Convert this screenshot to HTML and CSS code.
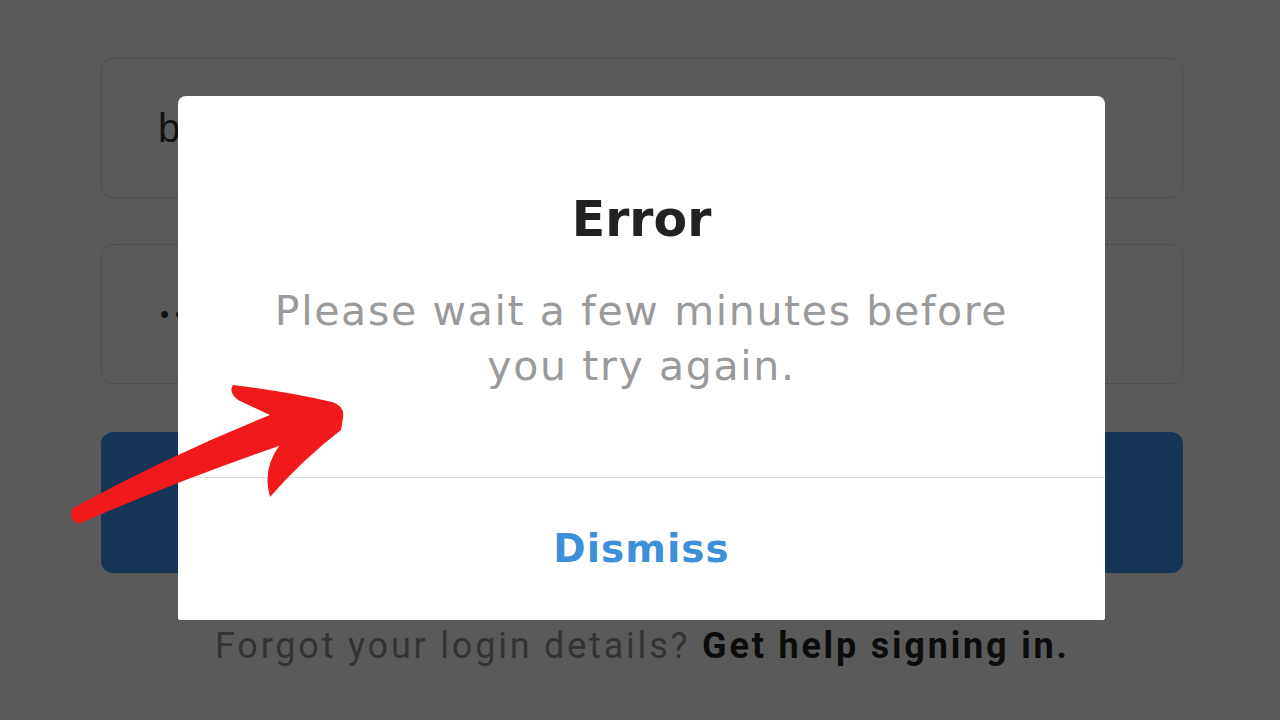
FILE: index.html
```html
<!DOCTYPE html>
<html>
<head>
<meta charset="utf-8">
<link rel="stylesheet" href="styles.css">
</head>
<body>
<div class="page">
  <div class="form">
    <div class="field"><span class="val">b</span></div>
    <div class="field"><span class="val dots">••••</span></div>
    <div class="btn"></div>
    <p class="help"><span class="muted">Forgot your login details?</span> <b>Get help signing in.</b></p>
  </div>
  <div class="modal">
    <div class="modal-body">
      <h1 class="title">Error</h1>
      <p class="msg">Please wait a few minutes before<br>you try again.</p>
    </div>
    <div class="modal-action">Dismiss</div>
  </div>
  <svg class="arrow" width="1280" height="720" viewBox="0 0 1280 720">
    <path d="M73,508 Q170,455 270,415 L238,400 Q228,392 233,385 Q290,392 332,402 Q345,406 343,418 L341,430 Q302,460 270,497 Q262,470 279,446 Q180,480 78,524 Q67,518 73,508 Z" fill="#f2191b"/>
  </svg>
</div>
</body>
</html>
```
FILE: styles.css
```css
html, body {
  margin: 0;
  padding: 0;
  background: #5a5a5a;
}
.page {
  position: relative;
  width: 1280px;
  height: 720px;
  overflow: hidden;
  font-family: "DejaVu Sans", sans-serif;
}
.form {
  padding: 58px 0 0 101px;
  width: 1082px;
  display: flex;
  flex-direction: column;
}
.field {
  border: 1.5px solid #4f4f4f;
  border-radius: 12px;
  margin-bottom: 46px;
  display: flex;
  align-items: center;
  padding-left: 56px;
  box-sizing: border-box;
  height: 140px;
}
.field + .field { margin-bottom: 48px; }
.val {
  font-family: "Liberation Sans", sans-serif;
  font-size: 40px;
  color: #111;
}
.dots { font-size: 26px; letter-spacing: 6px; padding-left: 2px; }
.btn {
  height: 141px;
  background: #153556;
  border-radius: 12px;
}
.help {
  margin: 52px 0 0 0;
  padding-left: 114px;
  font-family: Roboto, sans-serif;
  font-size: 36px;
  letter-spacing: 2.8px;
  color: #111;
}
.muted { color: #333; }
.help b { font-weight: 700; color: #0c0c0c; }
.modal {
  position: absolute;
  left: 178px;
  top: 96px;
  width: 927px;
  height: 524px;
  background: #fff;
  border-radius: 8px 8px 2px 2px;
  display: flex;
  flex-direction: column;
}
.modal-body {
  height: 382px;
  border-bottom: 1.5px solid #dedede;
  box-sizing: border-box;
  text-align: center;
  padding-top: 96px;
}
.title {
  margin: 0;
  font-size: 49px;
  font-weight: 700;
  color: #222;
  line-height: 56px;
}
.msg {
  margin: 36px 0 0 0;
  font-size: 41px;
  line-height: 55px;
  color: #9a9a9a;
  letter-spacing: 1.65px;
}
.modal-action {
  flex: 1;
  display: flex;
  align-items: center;
  justify-content: center;
  font-size: 39px;
  font-weight: 700;
  color: #3c8fd8;
  letter-spacing: 1px;
  padding-bottom: 2px;
}
.arrow {
  position: absolute;
  left: 0;
  top: 0;
}
```
